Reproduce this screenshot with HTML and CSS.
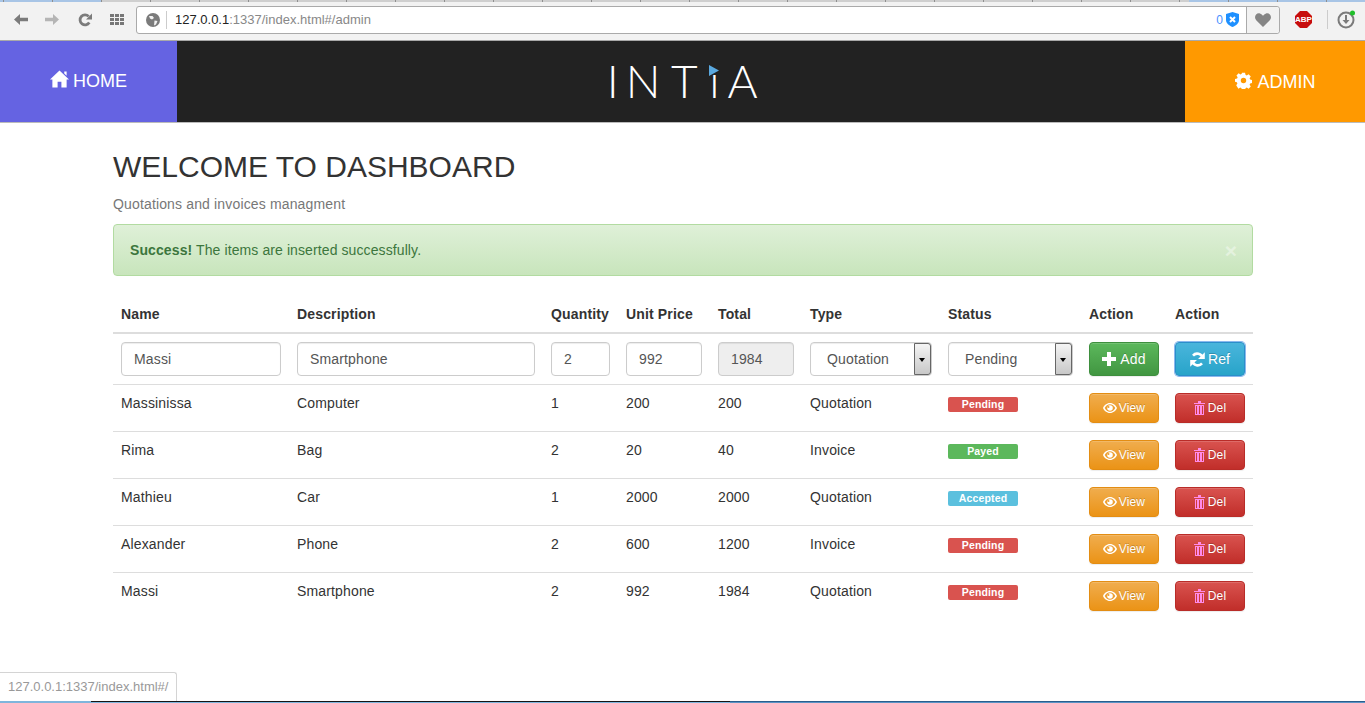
FILE: index.html
```html
<!DOCTYPE html>
<html lang="en">
<head>
    <meta charset="UTF-8">
    <meta name="viewport" content="width=device-width, initial-scale=1.0">
    <title>Intia dashboard</title>
    <link rel="stylesheet" href="styles.css">
</head>
<body>
    <svg class="sprite" xmlns="http://www.w3.org/2000/svg">
        <symbol id="i-home" viewBox="0 0 20 18"><path d="M10 0 L20 9.500 L17.500 9.500 L17.500 18 L12 18 L12 12 L8 12 L8 18 L2.500 18 L2.500 9.500 L0 9.500 Z M15 1 L17.500 1 L17.500 5.500 L15 3.200 Z"/></symbol>
        <symbol id="i-cog" viewBox="0 0 20 20"><path fill-rule="evenodd" d="M8 0h4l.6 2.700 1.600.7 2.400-1.500 2.800 2.800-1.500 2.400.7 1.600 2.700.6v4l-2.700.6-.7 1.600 1.500 2.400-2.800 2.800-2.400-1.500-1.600.7-.6 2.700H8l-.6-2.700-1.600-.7-2.400 1.500L.6 16.300l1.500-2.400-.7-1.600L-1 11.700V8l2.700-.6.7-1.600L.9 3.400 3.700.6l2.400 1.500 1.600-.7z M10 6.500a3.500 3.500 0 1 0 0 7 3.500 3.500 0 0 0 0-7z" transform="translate(.9 .9) scale(.91)"/></symbol>
        <symbol id="i-plus" viewBox="0 0 14 14"><path d="M5 0h4v5h5v4H9v5H5V9H0V5h5z"/></symbol>
        <symbol id="i-refresh" viewBox="0 0 14 14"><path fill="none" stroke="#fff" stroke-width="2.400" d="M11.800 5.500A5.200 5.200 0 0 0 2.800 3.400M2.200 8.500a5.200 5.200 0 0 0 9 2.100"/><path d="M13.800 0.200v6.300H7.500zM.2 13.800V7.500H6.500z"/></symbol>
        <symbol id="i-eye" viewBox="0 0 14 10"><path fill-rule="evenodd" d="M7 0c3.400 0 5.900 2.400 7 5-1.100 2.600-3.600 5-7 5S1.100 7.600 0 5c1.100-2.600 3.600-5 7-5z M7 1.300C4.800 1.300 2.800 2.800 1.700 5 2.800 7.200 4.800 8.700 7 8.700S11.200 7.200 12.300 5C11.200 2.800 9.200 1.300 7 1.300z"/><path fill-rule="evenodd" d="M7 2.200a2.800 2.800 0 1 1 0 5.600 2.800 2.800 0 0 1 0-5.600z M5.500 3a1 1 0 1 0 0 2 1 1 0 0 0 0-2z"/></symbol>
        <symbol id="i-trash" viewBox="0 0 11 14"><path fill-rule="evenodd" d="M4 0h3v2H11V3H0V2H4zM1 4H10V14H1z M2 5v8h1V5z M5 5v8h1V5z M8 5v8h1V5z"/></symbol>
    </svg>

    <!-- browser toolbar -->
    <div class="browser">
        <div class="tabstrip"></div>
        <div class="toolbar">
            <svg class="tool tool-back" width="14" height="11" viewBox="0 0 14 11"><path fill="#7b7b7b" d="M6 0 0 5.500 6 11V7.200h8V3.800H6z"/></svg>
            <svg class="tool tool-fwd" width="14" height="11" viewBox="0 0 14 11"><path fill="#b5b5b5" d="M8 0l6 5.500L8 11V7.200H0V3.800h8z"/></svg>
            <svg class="tool tool-reload" width="14" height="14" viewBox="0 0 14 14"><path fill="none" stroke="#7b7b7b" stroke-width="2.800" d="M11.300 9.500A5 5 0 1 1 10.700 3.400"/><path fill="#7b7b7b" d="M14 .5v6H8z"/></svg>
            <svg class="tool tool-apps" width="14" height="11" viewBox="0 0 14 11"><path fill="#777" d="M0 0h4v3H0zM5 0h4v3H5zM10 0h4v3h-4zM0 4h4v3H0zM5 4h4v3H5zM10 4h4v3h-4zM0 8h4v3H0zM5 8h4v3H5zM10 8h4v3h-4z"/></svg>
            <div class="omnibox">
                <svg class="globe" width="14" height="14" viewBox="0 0 14 14"><circle cx="7" cy="7" r="7" fill="#7b7b7b"/><path fill="#f2f2f2" d="M3 3h3.500L8 5 6 6.500 4 5.500zM8.500 7.500l3 .5-1.500 3.500-2 1z"/></svg>
                <span class="url"><b>127.0.0.1</b>:1337/index.html#/admin</span>
                <span class="shield-count">0</span>
                <svg class="shield" width="13" height="15" viewBox="0 0 13 15"><path fill="#1e90ff" d="M6.500 0 13 2v6c0 3.500-3 5.500-6.500 7C3 13.500 0 11.500 0 8V2z"/><path stroke="#fff" stroke-width="2" d="M4 5l5 5M9 5l-5 5"/></svg>
                <div class="heart-box">
                    <svg width="16" height="14" viewBox="0 0 16 14"><path fill="#858585" d="M8 14 1.200 7.200C-1.800 3.500 1.500-.8 5 .4 6.300.9 7.300 1.800 8 2.800 8.700 1.800 9.700.9 11 .4c3.500-1.200 6.800 3.100 3.800 6.800z"/></svg>
                </div>
            </div>
            <svg class="abp" width="17" height="17" viewBox="0 0 17 17"><path fill="#c70d0d" d="M5 0h7l5 5v7l-5 5H5l-5-5V5z"/></svg>
            <span class="abp-text">ABP</span>
            <span class="tool-sep"></span>
            <svg class="update" width="19" height="19" viewBox="0 0 19 19"><circle cx="9" cy="10" r="7.500" fill="none" stroke="#7b7b7b" stroke-width="2"/><path fill="#7b7b7b" d="M8 5h2v5h2.500L9 14 5.500 10H8z"/><circle cx="15.500" cy="3" r="2.500" fill="#1fbf2a"/></svg>
        </div>
    </div>

    <header class="navbar">
        <a class="nav-home" href="#/"><svg class="ico-home"><use href="#i-home"/></svg>HOME</a>
        <div class="logo"><span class="logo-first">I</span>NT<span class="logo-i">ı<svg class="logo-flag" viewBox="0 0 10 11"><path d="M0 0 10 5.500 0 11z"/></svg></span>A</div>
        <a class="nav-admin" href="#/admin"><svg class="ico-cog"><use href="#i-cog"/></svg>ADMIN</a>
    </header>

    <main class="container">
        <h2>WELCOME TO DASHBOARD</h2>
        <p class="lead">Quotations and invoices managment</p>

        <div class="alert">
            <strong>Success!</strong> The items are inserted successfully.
            <span class="close">×</span>
        </div>

        <table class="table">
            <thead>
                <tr>
                    <th class="c-name">Name</th>
                    <th class="c-desc">Description</th>
                    <th class="c-qty">Quantity</th>
                    <th class="c-price">Unit Price</th>
                    <th class="c-total">Total</th>
                    <th class="c-type">Type</th>
                    <th class="c-status">Status</th>
                    <th class="c-act">Action</th>
                    <th class="c-act">Action</th>
                </tr>
            </thead>
            <tbody>
                <tr class="form-row">
                    <td><input class="field" value="Massi"></td>
                    <td><input class="field" value="Smartphone"></td>
                    <td><input class="field" value="2"></td>
                    <td><input class="field" value="992"></td>
                    <td><input class="field" value="1984" disabled></td>
                    <td><div class="fake-select">Quotation<span class="arrow"></span></div></td>
                    <td><div class="fake-select">Pending<span class="arrow"></span></div></td>
                    <td><button class="btn btn-add"><svg class="ico-plus"><use href="#i-plus"/></svg>Add</button></td>
                    <td><button class="btn btn-ref"><svg class="ico-refresh"><use href="#i-refresh"/></svg>Ref</button></td>
                </tr>
                <tr>
                    <td>Massinissa</td><td>Computer</td><td>1</td><td>200</td><td>200</td><td>Quotation</td>
                    <td><span class="label label-pending">Pending</span></td>
                    <td><button class="btn btn-sm btn-view"><svg class="ico-eye"><use href="#i-eye"/></svg>View</button></td>
                    <td><button class="btn btn-sm btn-del"><svg class="ico-trash"><use href="#i-trash"/></svg>Del</button></td>
                </tr>
                <tr>
                    <td>Rima</td><td>Bag</td><td>2</td><td>20</td><td>40</td><td>Invoice</td>
                    <td><span class="label label-payed">Payed</span></td>
                    <td><button class="btn btn-sm btn-view"><svg class="ico-eye"><use href="#i-eye"/></svg>View</button></td>
                    <td><button class="btn btn-sm btn-del"><svg class="ico-trash"><use href="#i-trash"/></svg>Del</button></td>
                </tr>
                <tr>
                    <td>Mathieu</td><td>Car</td><td>1</td><td>2000</td><td>2000</td><td>Quotation</td>
                    <td><span class="label label-accepted">Accepted</span></td>
                    <td><button class="btn btn-sm btn-view"><svg class="ico-eye"><use href="#i-eye"/></svg>View</button></td>
                    <td><button class="btn btn-sm btn-del"><svg class="ico-trash"><use href="#i-trash"/></svg>Del</button></td>
                </tr>
                <tr>
                    <td>Alexander</td><td>Phone</td><td>2</td><td>600</td><td>1200</td><td>Invoice</td>
                    <td><span class="label label-pending">Pending</span></td>
                    <td><button class="btn btn-sm btn-view"><svg class="ico-eye"><use href="#i-eye"/></svg>View</button></td>
                    <td><button class="btn btn-sm btn-del"><svg class="ico-trash"><use href="#i-trash"/></svg>Del</button></td>
                </tr>
                <tr>
                    <td>Massi</td><td>Smartphone</td><td>2</td><td>992</td><td>1984</td><td>Quotation</td>
                    <td><span class="label label-pending">Pending</span></td>
                    <td><button class="btn btn-sm btn-view"><svg class="ico-eye"><use href="#i-eye"/></svg>View</button></td>
                    <td><button class="btn btn-sm btn-del"><svg class="ico-trash"><use href="#i-trash"/></svg>Del</button></td>
                </tr>
            </tbody>
        </table>
    </main>

    <div class="status-bubble">127.0.0.1:1337/index.html#/</div>
    <div class="taskbar"></div>
</body>
</html>
```

FILE: styles.css
```css
* {
    box-sizing: border-box;
}

html, body {
    height: 703px;
    overflow: hidden;
}

body {
    margin: 0;
    font-family: "Liberation Sans", Arial, sans-serif;
    font-size: 14px;
    line-height: 20px;
    color: #333;
    background-color: #fff;
    position: relative;
}

.sprite {
    display: none;
}

/* browser */
.browser {
    height: 41px;
    background-color: #f2f2f2;
    border-bottom: 1px solid #a9a9a9;
}

.tabstrip {
    height: 2px;
    background:
        linear-gradient(to right, #8f8f8f 1px, transparent 1px) 101px 0 / 49px 2px repeat-x,
        linear-gradient(to right, #a8c5e6 101px, #cfcfcf 101px, #cfcfcf 1189px, #a8c5e6 1189px);
}

.toolbar {
    display: flex;
    align-items: center;
    height: 38px;
    padding: 0 0 3px 14px;
}

.tool {
    flex: none;
}

.tool-back { margin-right: 17px; }
.tool-fwd { margin-right: 19px; }
.tool-reload { margin-right: 18px; }
.tool-apps { margin-right: 12px; }

.omnibox {
    flex: none;
    display: flex;
    align-items: center;
    width: 1144px;
    height: 28px;
    background-color: #fff;
    border: 1px solid #aaa;
    border-radius: 3px;
    padding-left: 9px;
}

.globe {
    flex: none;
}

.url {
    flex: 1;
    margin-left: 6px;
    padding-left: 8px;
    border-left: 1px solid #ccc;
    font-size: 13px;
    line-height: 18px;
    color: #888;
}

.url b {
    font-weight: normal;
    color: #222;
}

.shield-count {
    font-size: 12px;
    color: #4a90ff;
    margin-right: 3px;
}

.shield {
    margin-right: 7px;
}

.heart-box {
    display: flex;
    align-items: center;
    justify-content: center;
    width: 33px;
    height: 26px;
    background-color: #f2f2f2;
    border-left: 1px solid #aaa;
    border-radius: 0 3px 3px 0;
}

.abp {
    margin-left: 15px;
    flex: none;
}

.abp-text {
    margin-left: -17px;
    width: 17px;
    text-align: center;
    font-size: 8px;
    font-weight: bold;
    color: #fff;
    position: relative;
}

.tool-sep {
    width: 1px;
    height: 19px;
    margin-left: 15px;
    background-color: #ccc;
}

.update {
    margin-left: 9px;
    flex: none;
}

/* navbar */
.navbar {
    display: flex;
    align-items: stretch;
    height: 82px;
    background-color: #222;
    border-bottom: 1px solid #bbb;
}

.navbar a {
    display: flex;
    align-items: center;
    justify-content: center;
    flex: none;
    width: 177px;
    font-size: 18px;
    color: #fff;
    text-decoration: none;
}

.nav-home {
    padding-bottom: 2px;
    background-color: #6563e2;
}

.nav-admin {
    width: 180px !important;
    background-color: #f90;
}

.ico-home {
    width: 19px;
    height: 18px;
    margin: -3px 4px 0 0;
    fill: #fff;
}

.ico-cog {
    width: 17px;
    height: 17px;
    margin: -3px 6px 0 0;
    fill: #fff;
}

.logo {
    flex: 1;
    text-align: center;
    font-family: Lato, "Liberation Sans", sans-serif;
    font-weight: 300;
    font-size: 46px;
    line-height: 79px;
    letter-spacing: 10.500px;
    color: #fff;
    padding-left: 13px;
}

.logo-first {
    letter-spacing: 7px;
}

.logo-i {
    position: relative;
    margin-left: 1px;
    letter-spacing: 8px;
}

.logo-flag {
    position: absolute;
    left: 0;
    top: 12px;
    width: 10px;
    height: 11px;
    fill: #5aa9e0;
}

/* content */
.container {
    width: 1140px;
    margin-left: 113px;
    padding-top: 27px;
}

h2 {
    margin: 0 0 11px;
    font-size: 30px;
    font-weight: 500;
    line-height: 33px;
    color: #333;
}

.lead {
    margin: 0 0 10px;
    color: #777;
    letter-spacing: 0.15px;
}

.alert {
    position: relative;
    height: 52px;
    padding: 15px 16px;
    margin-bottom: 20px;
    border: 1px solid #b2dba1;
    border-radius: 4px;
    color: #3c763d;
    letter-spacing: 0.1px;
    background: linear-gradient(to bottom, #dff0d8 0, #c8e5bc 100%);
}

.close {
    position: absolute;
    right: 15px;
    top: 16px;
    font-size: 21px;
    font-weight: bold;
    color: #fff;
    opacity: 0.4;
}

.table {
    width: 1140px;
    border-collapse: collapse;
    table-layout: fixed;
    letter-spacing: 0.15px;
}

.c-name { width: 176px; }
.c-desc { width: 254px; }
.c-qty { width: 75px; }
.c-price { width: 92px; }
.c-total { width: 92px; }
.c-type { width: 138px; }
.c-status { width: 141px; }
.c-act { width: 86px; }

.table th {
    padding: 8px;
    text-align: left;
    border-bottom: 2px solid #ddd;
}

.table td {
    padding: 8px;
    vertical-align: top;
    border-top: 1px solid #ddd;
}

.form-row td {
    border-top: 0;
}

.field {
    display: block;
    width: 100%;
    height: 34px;
    padding: 6px 12px;
    font-family: inherit;
    font-size: 14px;
    letter-spacing: inherit;
    color: #555;
    background-color: #fff;
    border: 1px solid #ccc;
    border-radius: 4px;
    box-shadow: inset 0 1px 1px rgba(0, 0, 0, 0.075);
}

.field:disabled {
    background-color: #eee;
}

.fake-select {
    position: relative;
    width: 122px;
    height: 34px;
    padding: 6px 16px;
    color: #555;
    border: 1px solid #ccc;
    border-radius: 4px;
    box-shadow: inset 0 1px 1px rgba(0, 0, 0, 0.075);
}

td:nth-child(7) .fake-select {
    width: 125px;
}

.arrow {
    position: absolute;
    right: 0;
    top: 0;
    width: 17px;
    height: 32px;
    border: 1px solid #666;
    border-radius: 0 3px 3px 0;
    background: linear-gradient(to bottom, #f4f4f4, #c8c8c8);
}

.arrow::after {
    content: "";
    position: absolute;
    left: 4px;
    top: 14px;
    border-style: solid;
    border-width: 4px 3.500px 0;
    border-color: #000 transparent transparent;
}

.btn {
    display: flex;
    align-items: center;
    justify-content: center;
    width: 70px;
    height: 34px;
    padding: 0;
    font-family: inherit;
    font-size: 14px;
    letter-spacing: inherit;
    color: #fff;
    border: 1px solid transparent;
    border-radius: 4px;
    box-shadow: inset 0 1px 0 rgba(255, 255, 255, 0.15), 0 1px 1px rgba(0, 0, 0, 0.075);
    text-shadow: 0 -1px 0 rgba(0, 0, 0, 0.2);
}

.btn-sm {
    height: 30px;
    font-size: 12px;
}

.btn-add {
    background: linear-gradient(to bottom, #5cb85c, #419641);
    border-color: #3e8f3e;
}

.btn-ref {
    background: linear-gradient(to bottom, #4ab5dc, #28a4c9);
    border-color: #2b8fc9;
    box-shadow: 0 0 0 1px #8bb8ee;
}

.btn-view {
    background: linear-gradient(to bottom, #f0ad4e, #eb9316);
    border-color: #e38d13;
}

.btn-del {
    background: linear-gradient(to bottom, #d9534f, #c12e2a);
    border-color: #b92c28;
}

.ico-plus {
    width: 14px;
    height: 14px;
    margin-right: 4px;
    fill: #fff;
}

.ico-refresh {
    width: 15px;
    height: 15px;
    margin-right: 3px;
    fill: #fff;
}

.ico-eye {
    width: 14px;
    height: 10px;
    margin-right: 2px;
    fill: #fff;
}

.ico-trash {
    width: 11px;
    height: 14px;
    margin-right: 3px;
    fill: #ff8ae8;
}

.label {
    display: block;
    width: 70px;
    height: 15px;
    margin-top: 4px;
    font-size: 10.500px;
    font-weight: bold;
    line-height: 15px;
    text-align: center;
    color: #fff;
    border-radius: 2px;
}

.label-pending { background-color: #d9534f; }
.label-payed { background-color: #5cb85c; }
.label-accepted { background-color: #5bc0de; }

/* overlays */
.status-bubble {
    position: absolute;
    left: -1px;
    bottom: 2px;
    width: 178px;
    height: 29px;
    padding: 4px 0 0 8px;
    font-size: 13px;
    color: #999;
    background-color: #fff;
    border: 1px solid #d4d4d4;
    border-bottom: 0;
    border-radius: 0 3px 0 0;
}

.taskbar {
    position: absolute;
    left: 0;
    right: 0;
    bottom: 0;
    height: 2px;
    background:
        linear-gradient(to right, #7fb5dc 91px, #151515 91px, #151515 730px, #2b5d8c 730px) 0 0 / 100% 1px no-repeat,
        linear-gradient(to right, #7fb5dc 730px, #5b93c4 730px);
}
```
